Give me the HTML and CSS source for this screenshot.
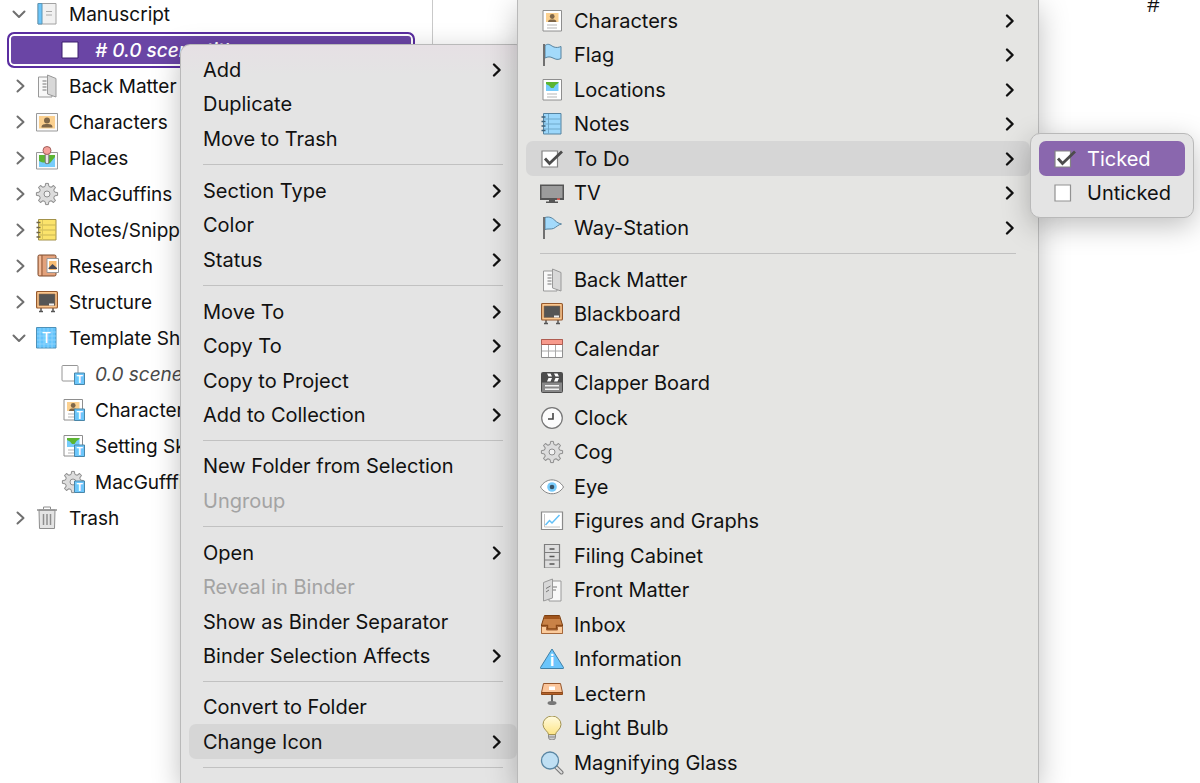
FILE: index.html
```html
<!DOCTYPE html>
<html lang="en">
<head>
  <meta charset="UTF-8">
  <meta name="viewport" content="width=device-width, initial-scale=1.0">
  <title>Binder</title>
  <link rel="stylesheet" href="styles.css">
</head>
<body>
  <!-- Icon sprite -->
  <svg class="sprite" aria-hidden="true">
    <linearGradient id="glow" x1="0" y1="0" x2="0" y2="1">
      <stop offset="0" stop-color="#fffbe0"/><stop offset="1" stop-color="#fde588"/>
    </linearGradient>
    <symbol id="go" viewBox="0 0 12 16"><path d="M3 2.5 8.6 8 3 13.5" fill="none" stroke="currentColor" stroke-width="2.4" stroke-linecap="round" stroke-linejoin="round"/></symbol>
    <symbol id="closed" viewBox="0 0 15 16"><path d="M5.500 2.500 11.500 8l-6 5.500" fill="none" stroke="#6f6f6f" stroke-width="2" stroke-linecap="round" stroke-linejoin="round"/></symbol>
    <symbol id="open" viewBox="0 0 15 16"><path d="M1.500 5.500 7 11l5.500-5.500" fill="none" stroke="#6f6f6f" stroke-width="2" stroke-linecap="round" stroke-linejoin="round"/></symbol>
    <symbol id="badge" viewBox="0 0 24 24">
      <path d="M13.500 11h10v11.500h-10z" fill="#6cc6fb" stroke="#4a86a8"/>
      <text x="18.500" y="20.500" class="badge-letter">T</text>
    </symbol>
    <symbol id="manuscript" viewBox="0 0 24 24">
      <path d="M3 1.500h18v20.500H3z" fill="#f1f1f1" stroke="#a2a2a2"/>
      <path d="M3 1.500h4v20.500H3z" fill="#6cc6fb" stroke="#5b95b5"/>
      <path d="M11 9.500h6M11 13h6" stroke="#aaa"/>
    </symbol>
    <symbol id="back-matter" viewBox="0 0 24 24">
      <path d="M3.500 3H17v20H3.500z" fill="#f8f8f8" stroke="#999"/>
      <path d="M7.500 7h4M7.500 10h4M7.500 13h4M7.500 16h4" stroke="#777"/>
      <path d="M12.500 1l8.500 3.500V23l-8.500-3z" fill="#d8d8d8" stroke="#999" stroke-linejoin="round"/>
    </symbol>
    <symbol id="front-matter" viewBox="0 0 24 24">
      <path d="M9 3h12v20H9z" fill="#f8f8f8" stroke="#999"/>
      <path d="M13 9h4M13 12h3" stroke="#777"/>
      <path d="M3.500 4.500L12.500 1v19l-9 3z" fill="#d8d8d8" stroke="#999" stroke-linejoin="round"/>
      <path d="M6 10.500L10.500 8M6 14l3-2" stroke="#777"/>
    </symbol>
    <symbol id="portrait" viewBox="0 0 24 24">
      <path d="M1.500 3.500h21v17.500h-21z" fill="#fafafa" stroke="#999"/>
      <path d="M4 6h16v12.500H4z" fill="#fbd08f"/>
      <circle cx="12" cy="10.500" r="3" fill="#7e6648"/>
      <path d="M6.500 17.500c0-3 2-3.500 5.500-3.500s5.500.5 5.500 3.500z" fill="#7e6648"/>
    </symbol>
    <symbol id="places" viewBox="0 0 24 24">
      <path d="M1.500 6.500h21v16.500h-21z" fill="#fafafa" stroke="#999"/>
      <path d="M4 9h16v12H4z" fill="#76ccfb"/>
      <path d="M4 9h16v2l-5 6-5 4H6l-2-3z" fill="#5cb531"/>
      <path d="M4 15c3 2 5 1 7 2l4 1c1 2-1 3-2 3H4z" fill="#76ccfb"/>
      <path d="M12 7v9" stroke="#777" stroke-width="4.500" stroke-linecap="round"/>
      <path d="M12 7v9" stroke="#e6e6e6" stroke-width="2.500" stroke-linecap="round"/>
      <circle cx="12" cy="4.500" r="4" fill="#f5a09a" stroke="#a2605c"/>
    </symbol>
    <symbol id="cog" viewBox="-12 -12 24 24">
      <circle r="7.400"/>
      <path id="tooth" d="M-2.980-7.200-1.900-7.570-1.400-10.600H1.400L1.900-7.570 2.980-7.200" stroke="#8e8e8e" stroke-linejoin="round"/>
      <use href="#tooth" transform="rotate(45)"/><use href="#tooth" transform="rotate(90)"/>
      <use href="#tooth" transform="rotate(135)"/><use href="#tooth" transform="rotate(180)"/>
      <use href="#tooth" transform="rotate(225)"/><use href="#tooth" transform="rotate(270)"/>
      <use href="#tooth" transform="rotate(315)"/>
      <circle r="3" fill="#f2f2f2" stroke="#8e8e8e"/>
    </symbol>
    <symbol id="snippets" viewBox="0 0 24 24">
      <path d="M3.500 1.500h17.500v20.500H3.500z" fill="#fbe36b" stroke="#a3924a"/>
      <path d="M4 7h17M4 12h17M4 17h17" stroke="#c9b557"/><path d="M7.500 2v20" stroke="#d9c45c"/>
      <path d="M1.500 4.500h4M1.500 9.500h4M1.500 14.500h4M1.500 19h4" stroke="#6e6547" stroke-width="1.300"/>
    </symbol>
    <symbol id="notes" viewBox="0 0 24 24">
      <path d="M3.500 1.500h17.500v20.500H3.500z" fill="#9bd7fb" stroke="#5583a0"/>
      <path d="M4 7h17M4 12h17M4 17h17" stroke="#6fa9cb"/><path d="M8.500 2v20" stroke="#6fa9cb"/>
      <path d="M1.500 5h4M1.500 9.500h4M1.500 14h4M1.500 18.500h4" stroke="#3f6178" stroke-width="1.300"/>
    </symbol>
    <symbol id="research" viewBox="0 0 24 24">
      <rect x="3" y="1" width="18" height="21" rx="1.500" fill="#e3a27c" stroke="#7c4a2d"/>
      <path d="M7 1v21" stroke="#8d5636"/><path d="M5 2v19" stroke="#f1bb99" stroke-width="2"/>
      <path d="M12 4.500h11.500V18.500H12z" fill="#fff" stroke="#999"/>
      <path d="M14 7h7.500v9H14z" fill="#f9bd73"/><path d="M13.500 15v-1l4-4 4.500 4v1z" fill="#4b4b55"/>
    </symbol>
    <symbol id="blackboard" viewBox="0 0 24 24">
      <path d="M6 17v4.500M18 17v4.500M4 21.500h4M16 21.500h4" stroke="#555" stroke-width="1.500"/>
      <rect x="1.600" y="1.500" width="20.800" height="16.500" rx="1" fill="#fbc78e" stroke="#96592d" stroke-width="1.200"/>
      <path d="M4 4h16v11.500H4z" fill="#555" stroke="#8f6a4c" stroke-width=".6"/><path d="M14 13.500h5v2h-5z" fill="#eee"/>
    </symbol>
    <symbol id="template" viewBox="0 0 24 24">
      <path d="M1.500 1.500h19.500v20.500H1.500z" fill="#64c4fc" stroke="#4e91b8"/>
      <path d="M5 2v20M9 2v20M13 2v20M17 2v20M2 6h19M2 10h19M2 14h19M2 18h19" stroke="#94d7fd" stroke-width=".8"/>
      <text x="11.200" y="16.500" class="template-letter">T</text>
    </symbol>
    <symbol id="card" viewBox="0 0 24 24"><path d="M1 4h16v16H1z" fill="#fff" stroke="#3a1c6c"/></symbol>
    <symbol id="blank" viewBox="0 0 24 24"><rect x="1" y="3.500" width="16" height="15.500" rx="1" fill="#fff" stroke="#969696"/></symbol>
    <symbol id="sheet" viewBox="0 0 24 24">
      <path d="M3 1.500h18.500v20.500H3z" fill="#fff" stroke="#8e8e8e"/>
      <path d="M6 4h12.500v9H6z" fill="#fbd08f"/><circle cx="12.200" cy="7.500" r="2.400" fill="#7e6648"/>
      <path d="M8 13c0-2 1.500-2.500 4.200-2.500s4.200.5 4.200 2.500z" fill="#7e6648"/>
      <path d="M7 16h10M7 19h10" stroke="#b5b5b5"/>
    </symbol>
    <symbol id="map" viewBox="0 0 24 24">
      <path d="M3 1.500h18.500v20.500H3z" fill="#fff" stroke="#8e8e8e"/>
      <path d="M6 4h12.500v9H6z" fill="#76ccfb"/><path d="M6 4h12.500v1l-3 2-2 3h-2.500L9 7.500 6 6z" fill="#5cb531"/>
      <path d="M7 16h10M7 19h10" stroke="#b5b5b5"/>
    </symbol>
    <symbol id="trash" viewBox="0 0 24 24">
      <path d="M8.500 3V1h7v2" fill="none" stroke="#8e8e8e"/>
      <path d="M4 4h16l-.5 18.500h-15z" fill="#e4e4e4" stroke="#8e8e8e"/><path d="M2 4h20" stroke="#8e8e8e" stroke-width="1.500"/>
      <path d="M8.500 8v11M12 8v11M15.500 8v11" stroke="#8e8e8e" stroke-width="1.500"/>
    </symbol>
    <symbol id="flag" viewBox="0 0 24 24">
      <path d="M5 2.500c4-3 6 .5 9 1.500 2.500.8 4.500.5 7-.5v12c-3 1.500-5 1-8-.5s-5-1.500-8 0z" fill="#a3dafb" stroke="#57839f"/>
      <path d="M4 1v22" stroke="#707070" stroke-width="2"/>
    </symbol>
    <symbol id="pennant" viewBox="0 0 24 24">
      <path d="M5 1.500c5-1.500 8 1 10 3s4 3 6.500 3.500c-3 .5-5 3-8 4.500-3 1-6 0-8.500 1z" fill="#a3dafb" stroke="#57839f"/>
      <path d="M4 1v22" stroke="#707070" stroke-width="2"/>
    </symbol>
    <symbol id="ticked" viewBox="0 0 24 24">
      <path d="M2 4h15.500v16H2z" fill="#fff" stroke="#848484" stroke-width="1.200"/>
      <path d="M5 11.500l4.500 5L22 4.500" fill="none" stroke="#4c4c4c" stroke-width="2.800"/>
    </symbol>
    <symbol id="unticked" viewBox="0 0 24 24"><path d="M2 4h15.500v16H2z" fill="#fff" stroke="#929292" stroke-width="1.200"/></symbol>
    <symbol id="tv" viewBox="0 0 24 24">
      <path d="M0 3.500h24v15.500H0z" fill="#555"/><path d="M1.500 5h21v12h-21z" fill="#9c9c9c"/>
      <path d="M9 19h6v1.500h3V22H6v-1.500h3z" fill="#555"/><path d="M17 17.500h3v1.300h-3z" fill="#ff6257"/>
    </symbol>
    <symbol id="calendar" viewBox="0 0 24 24">
      <path d="M1.500 2.500h21v18h-21z" fill="#fff" stroke="#8e8e8e"/><path d="M1.500 2.500h21v5h-21z" fill="#f79a8c" stroke="#b05c50"/>
      <path d="M8.500 8v12M15.500 8v12M2 14h20" stroke="#aaa"/>
    </symbol>
    <symbol id="clapper" viewBox="0 0 24 24">
      <rect x="1.500" y="1.500" width="21" height="20" rx="1" fill="#888" stroke="#4b4b4b"/>
      <path d="M2 2h20v9.500H2z" fill="#4d4d4d"/>
      <path d="M7 2.500h3.500l1.500 3H8.500zM14 2.500h3.500l1.500 3h-3.500zM8.500 7H12l-1.500 3.500H7zM15.500 7H19l-1.500 3.500H14z" fill="#fff"/>
      <path d="M5 14h14v1.500H5zM5 17.500h14V19H5z" fill="#f2f2f2"/>
    </symbol>
    <symbol id="clock" viewBox="0 0 24 24"><circle cx="12" cy="12" r="10.300" fill="#fcfcfc" stroke="#777" stroke-width="1.200"/><path d="M13 7v6H8" fill="none" stroke="#444" stroke-width="1.600"/></symbol>
    <symbol id="eye" viewBox="0 0 24 24">
      <path d="M.5 12C6 2.500 18 2.500 23.500 12 18 21 6 21 .5 12z" fill="#fff" stroke="#858585"/>
      <circle cx="12" cy="12" r="4.800" fill="#79cbfb"/><circle cx="12" cy="12" r="2.300" fill="#3a5264"/>
    </symbol>
    <symbol id="chart" viewBox="0 0 24 24">
      <path d="M1.500 3h21v17.500h-21z" fill="#fff" stroke="#8a8a8a" stroke-width="1.200"/>
      <path d="M4.500 5v13h15.500" fill="none" stroke="#c4c4c4"/><path d="M5.500 16l4-4.500 2.500 2.500 7.500-8" fill="none" stroke="#62c0f8" stroke-width="1.500"/>
    </symbol>
    <symbol id="cabinet" viewBox="0 0 24 24">
      <path d="M4.500.5h15v23.500h-15z" fill="#dedede" stroke="#7d7d7d" stroke-width="1.200"/><path d="M4.500 8.500h15M4.500 16h15" stroke="#7d7d7d" stroke-width="1.200"/>
      <path d="M9.500 5h5M9.500 12.500h5M9.500 20h5" stroke="#555" stroke-width="1.500"/>
    </symbol>
    <symbol id="inbox" viewBox="0 0 24 24">
      <path d="M4.500 2.500h15l3 9.500v8h-21v-8z" fill="#c98247" stroke="#7c3f10"/>
      <path d="M5 3h14l1 3H4z" fill="#a0541b"/>
      <path d="M2 12.500h5.500V16h9v-3.500H22" fill="none" stroke="#8a4715" stroke-width="1.400"/>
      <path d="M1.500 13.500h5v3.500h11v-3.500h5v7h-21z" fill="#fbcb9c" stroke="#a5673a"/>
    </symbol>
    <symbol id="info" viewBox="0 0 24 24">
      <path d="M12 2l11.500 18.500q.5 1-.5 1H1q-1 0-.5-1z" fill="#6bc5fb" stroke="#3e7fa6" stroke-linejoin="round"/>
      <text x="12" y="19" class="info-letter">i</text>
    </symbol>
    <symbol id="lectern" viewBox="0 0 24 24">
      <path d="M12 12v9" stroke="#666" stroke-width="2"/><ellipse cx="12" cy="21" rx="4.500" ry="2" fill="#777"/>
      <path d="M3.500 1.500h17l2 9h-21z" fill="#fbc59a" stroke="#96552a"/><path d="M1.500 10.500h21v2h-21z" fill="#b5622a" stroke="#8f4a1b"/>
      <path d="M9 4.500h6V8H9z" fill="#fff"/>
    </symbol>
    <symbol id="bulb" viewBox="0 0 24 24">
      <path d="M8.500 18h7v3.500q0 2.500-3.500 2.500t-3.500-2.500z" fill="#ccc" stroke="#8a8a8a"/><path d="M8.500 21h7" stroke="#8a8a8a"/>
      <path d="M8.500 18.500c0-3-5.500-5-5.500-10a9 8.500 0 0 1 18 0c0 5-5.500 7-5.500 10z" fill="url(#glow)" stroke="#a39350"/>
    </symbol>
    <symbol id="magnifier" viewBox="0 0 24 24">
      <path d="M15.500 15.500l6 6" stroke="#777" stroke-width="4" stroke-linecap="round"/><path d="M16.500 16.500l5 5" stroke="#ddd" stroke-width="2" stroke-linecap="round"/>
      <circle cx="10" cy="9.500" r="8.500" fill="#bfdff3" stroke="#5a86a3" stroke-width="1.300"/>
    </symbol>
  </svg>

  <main class="window">
    <nav class="binder" aria-label="Binder">
      <ul>
        <li class="row"><svg class="arrow"><use href="#open"/></svg><svg class="icon"><use href="#manuscript"/></svg><span>Manuscript</span></li>
        <li class="row child selected"><svg class="icon"><use href="#card"/></svg><em># 0.0 scene title</em></li>
        <li class="row"><svg class="arrow"><use href="#closed"/></svg><svg class="icon"><use href="#back-matter"/></svg><span>Back Matter</span></li>
        <li class="row"><svg class="arrow"><use href="#closed"/></svg><svg class="icon"><use href="#portrait"/></svg><span>Characters</span></li>
        <li class="row"><svg class="arrow"><use href="#closed"/></svg><svg class="icon"><use href="#places"/></svg><span>Places</span></li>
        <li class="row"><svg class="arrow"><use href="#closed"/></svg><svg class="icon cog"><use href="#cog"/></svg><span>MacGuffins</span></li>
        <li class="row"><svg class="arrow"><use href="#closed"/></svg><svg class="icon"><use href="#snippets"/></svg><span>Notes/Snippets</span></li>
        <li class="row"><svg class="arrow"><use href="#closed"/></svg><svg class="icon"><use href="#research"/></svg><span>Research</span></li>
        <li class="row"><svg class="arrow"><use href="#closed"/></svg><svg class="icon"><use href="#blackboard"/></svg><span>Structure</span></li>
        <li class="row"><svg class="arrow"><use href="#open"/></svg><svg class="icon"><use href="#template"/></svg><span>Template Sheets</span></li>
        <li class="row child"><svg class="icon"><use href="#blank"/><use href="#badge"/></svg><em>0.0 scene title</em></li>
        <li class="row child"><svg class="icon"><use href="#sheet"/><use href="#badge"/></svg><span>Character Sketch</span></li>
        <li class="row child"><svg class="icon"><use href="#map"/><use href="#badge"/></svg><span>Setting Sketch</span></li>
        <li class="row child"><svg class="icon cog"><use href="#cog"/><use href="#badge"/></svg><span>MacGufffins Sheet</span></li>
        <li class="row"><svg class="arrow"><use href="#closed"/></svg><svg class="icon"><use href="#trash"/></svg><span>Trash</span></li>
      </ul>
    </nav>
    <section class="editor">#</section>
  </main>

  <div class="menu context-menu" role="menu">
    <button role="menuitem">Add<svg class="go"><use href="#go"/></svg></button>
    <button role="menuitem">Duplicate</button>
    <button role="menuitem">Move to Trash</button>
    <hr>
    <button role="menuitem">Section Type<svg class="go"><use href="#go"/></svg></button>
    <button role="menuitem">Color<svg class="go"><use href="#go"/></svg></button>
    <button role="menuitem">Status<svg class="go"><use href="#go"/></svg></button>
    <hr>
    <button role="menuitem">Move To<svg class="go"><use href="#go"/></svg></button>
    <button role="menuitem">Copy To<svg class="go"><use href="#go"/></svg></button>
    <button role="menuitem">Copy to Project<svg class="go"><use href="#go"/></svg></button>
    <button role="menuitem">Add to Collection<svg class="go"><use href="#go"/></svg></button>
    <hr>
    <button role="menuitem">New Folder from Selection</button>
    <button role="menuitem" disabled>Ungroup</button>
    <hr>
    <button role="menuitem">Open<svg class="go"><use href="#go"/></svg></button>
    <button role="menuitem" disabled>Reveal in Binder</button>
    <button role="menuitem">Show as Binder Separator</button>
    <button role="menuitem">Binder Selection Affects<svg class="go"><use href="#go"/></svg></button>
    <hr>
    <button role="menuitem">Convert to Folder</button>
    <button role="menuitem" class="active">Change Icon<svg class="go"><use href="#go"/></svg></button>
    <hr>
  </div>

  <div class="menu icon-menu" role="menu">
    <button role="menuitem"><svg class="icon"><use href="#sheet"/></svg>Characters<svg class="go"><use href="#go"/></svg></button>
    <button role="menuitem"><svg class="icon"><use href="#flag"/></svg>Flag<svg class="go"><use href="#go"/></svg></button>
    <button role="menuitem"><svg class="icon"><use href="#map"/></svg>Locations<svg class="go"><use href="#go"/></svg></button>
    <button role="menuitem"><svg class="icon"><use href="#notes"/></svg>Notes<svg class="go"><use href="#go"/></svg></button>
    <button role="menuitem" class="active"><svg class="icon"><use href="#ticked"/></svg>To Do<svg class="go"><use href="#go"/></svg></button>
    <button role="menuitem"><svg class="icon"><use href="#tv"/></svg>TV<svg class="go"><use href="#go"/></svg></button>
    <button role="menuitem"><svg class="icon"><use href="#pennant"/></svg>Way-Station<svg class="go"><use href="#go"/></svg></button>
    <hr>
    <button role="menuitem"><svg class="icon"><use href="#back-matter"/></svg>Back Matter</button>
    <button role="menuitem"><svg class="icon"><use href="#blackboard"/></svg>Blackboard</button>
    <button role="menuitem"><svg class="icon"><use href="#calendar"/></svg>Calendar</button>
    <button role="menuitem"><svg class="icon"><use href="#clapper"/></svg>Clapper Board</button>
    <button role="menuitem"><svg class="icon"><use href="#clock"/></svg>Clock</button>
    <button role="menuitem"><svg class="icon cog"><use href="#cog"/></svg>Cog</button>
    <button role="menuitem"><svg class="icon"><use href="#eye"/></svg>Eye</button>
    <button role="menuitem"><svg class="icon"><use href="#chart"/></svg>Figures and Graphs</button>
    <button role="menuitem"><svg class="icon"><use href="#cabinet"/></svg>Filing Cabinet</button>
    <button role="menuitem"><svg class="icon"><use href="#front-matter"/></svg>Front Matter</button>
    <button role="menuitem"><svg class="icon"><use href="#inbox"/></svg>Inbox</button>
    <button role="menuitem"><svg class="icon"><use href="#info"/></svg>Information</button>
    <button role="menuitem"><svg class="icon"><use href="#lectern"/></svg>Lectern</button>
    <button role="menuitem"><svg class="icon"><use href="#bulb"/></svg>Light Bulb</button>
    <button role="menuitem"><svg class="icon"><use href="#magnifier"/></svg>Magnifying Glass</button>
  </div>

  <div class="menu todo-menu" role="menu">
    <button role="menuitem" class="chosen"><svg class="icon"><use href="#ticked"/></svg>Ticked</button>
    <button role="menuitem"><svg class="icon"><use href="#unticked"/></svg>Unticked</button>
  </div>
</body>
</html>
```
FILE: styles.css
```css
* {
  box-sizing: border-box;
}
body {
  margin: 0;
  height: 100vh;
  overflow: hidden;
  position: relative;
  background: #fff;
  color: #111;
  font-family: Inter, "Liberation Sans", sans-serif;
  font-size: 20px;
}
.sprite {
  position: absolute;
  width: 0;
  height: 0;
}
.window {
  display: flex;
  height: 100%;
}

/* Binder */
.binder {
  flex: 0 0 433px;
  border-right: 1px solid #c9c9c9;
  overflow: hidden;
  font-size: 19px;
}
.binder ul {
  list-style: none;
  margin: -4px 0 0;
  padding: 0;
}
.row {
  display: flex;
  align-items: center;
  height: 36px;
  padding-left: 12px;
  white-space: nowrap;
}
.row .icon {
  margin-left: 8px;
}
.row.child {
  padding-left: 53px;
}
.row.child em {
  color: #4a4a4a;
}
.row.selected {
  margin: 0 17px 0 7px;
  padding-left: 44px;
  border: 2px solid #5a2da0;
  border-radius: 7px;
  background: #6a45a5;
  box-shadow: inset 0 0 0 2px #fff;
}
.row.selected em {
  color: #fff;
  font-weight: 500;
}
.arrow {
  flex: none;
  width: 15px;
  height: 16px;
}
.icon {
  flex: none;
  width: 24px;
  height: 24px;
  margin-right: 10px;
}
.cog {
  fill: #dcdcdc;
}
.badge-letter, .template-letter, .info-letter {
  fill: #fff;
  font-size: 10px;
  font-weight: 700;
  text-anchor: middle;
}
.template-letter {
  font-size: 14px;
  font-weight: 500;
}
.info-letter {
  font-size: 15px;
}

.editor {
  flex: 1;
  padding-right: 40px;
  text-align: right;
  font-family: "Liberation Mono", monospace;
  font-size: 22px;
  line-height: 14px;
}

/* Menus */
.menu {
  position: absolute;
  padding: 7px 8px;
  background: #e4e4e4;
  border: 1px solid #b9b9b9;
  border-radius: 10px;
  box-shadow: 0 8px 28px rgba(0, 0, 0, 0.25);
}
.menu button {
  display: flex;
  align-items: center;
  width: 100%;
  height: 34px;
  padding: 0 14px;
  border: 0;
  border-radius: 7px;
  background: none;
  color: inherit;
  font: inherit;
  white-space: nowrap;
}
.menu button:nth-child(odd) {
  height: 35px;
}
.menu button:disabled {
  color: #a3a3a3;
}
.menu button.active {
  background: #d6d6d6;
}
.menu button.chosen {
  background: #8a67ae;
  color: #fff;
}
.menu hr {
  height: 1px;
  margin: 8px 14px;
  border: 0;
  background: #c1c1c1;
}
.go {
  width: 12px;
  height: 16px;
  margin-left: auto;
}
.context-menu {
  top: 44px;
  bottom: 0;
  left: 180px;
  width: 346px;
  border-bottom: 0;
  border-radius: 10px 10px 0 0;
  background: linear-gradient(#e6e0e4, #e4e4e4 30px);
}
.icon-menu {
  top: 0;
  bottom: 0;
  left: 517px;
  width: 522px;
  padding-top: 3px;
  border-width: 0 1px;
  border-radius: 0;
  background: #e5e5e3;
}
.todo-menu {
  top: 133px;
  left: 1030px;
  width: 164px;
}
```
